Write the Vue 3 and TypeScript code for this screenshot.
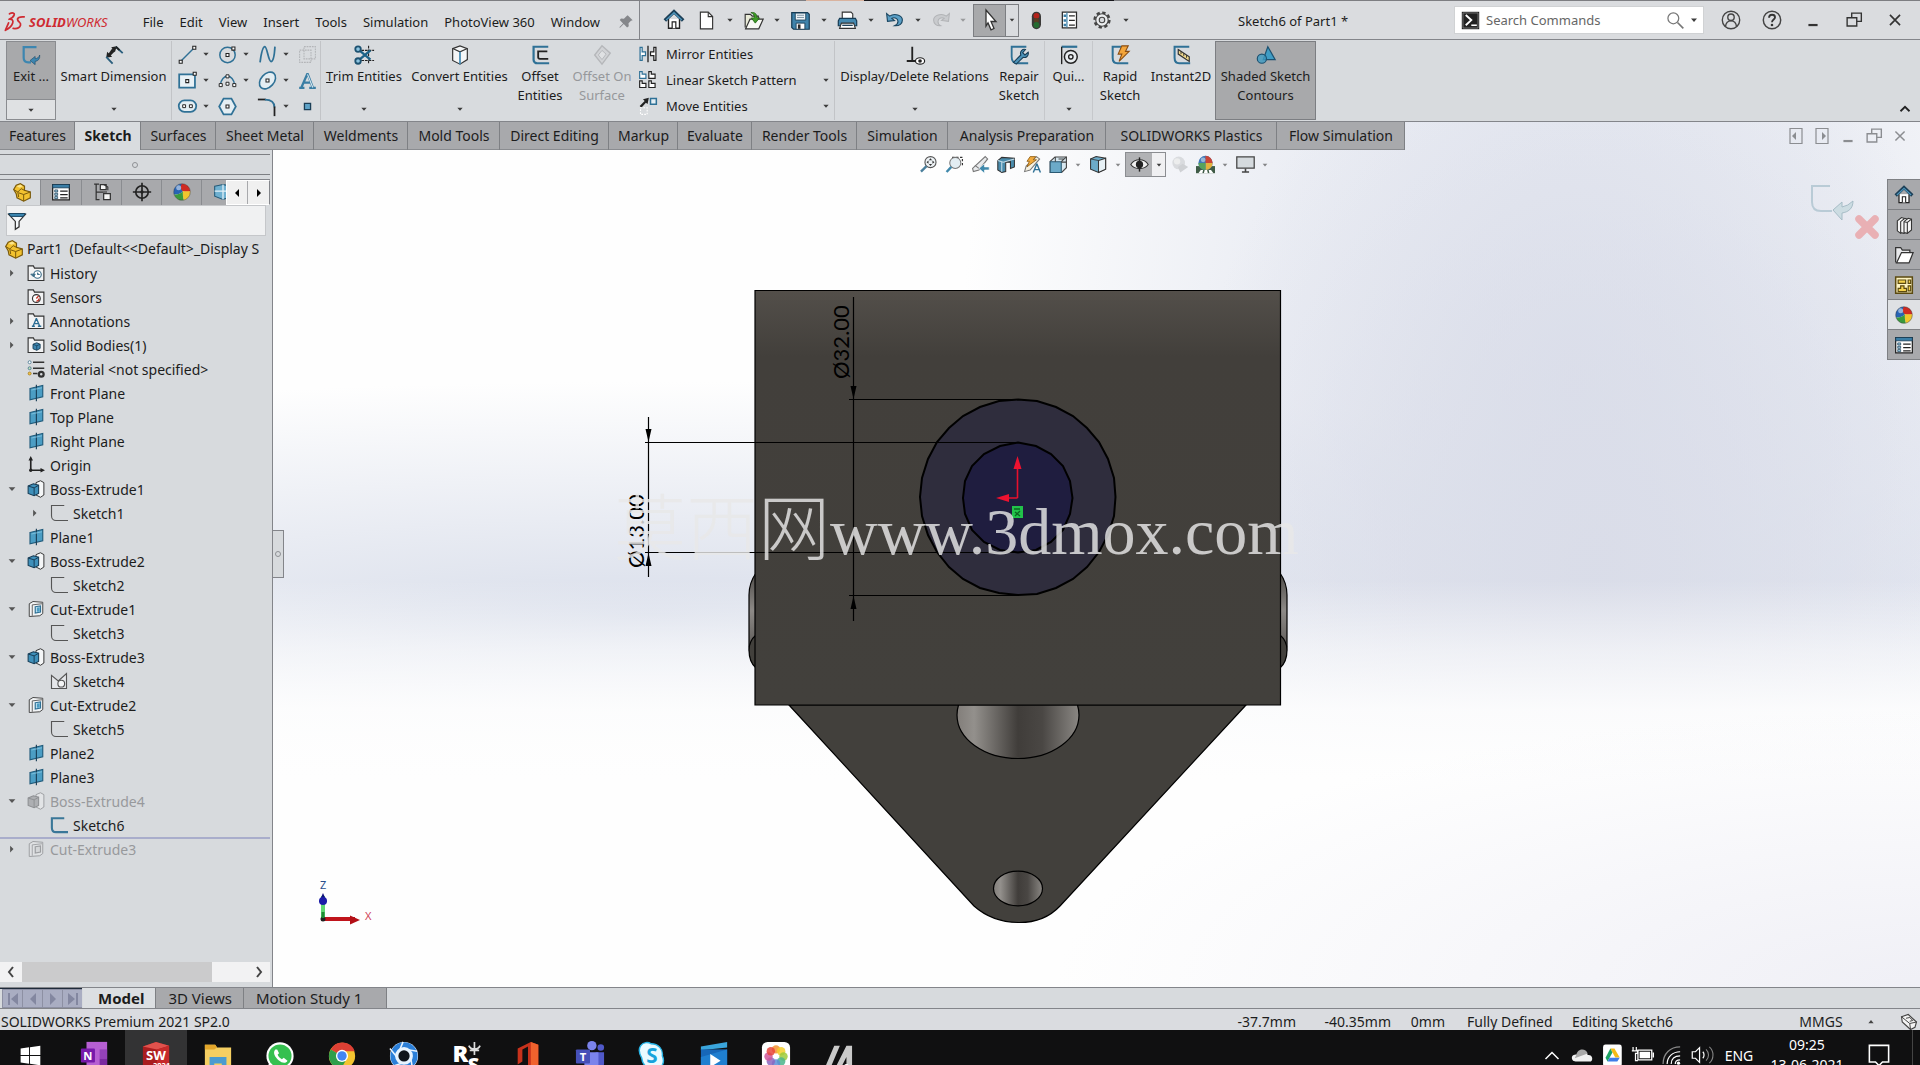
<script setup lang="ts">
import { defineComponent, h, ref } from 'vue'

const glyphs: Record<string, string> = {
  caret: '<path d="M8 10h8l-4 4.500z" fill="#3c3c3c"/>',
  pin: '<path d="M14 4l6 6-2 .5-3 3 .3 3.500-2 1.500-4-4-4.500 4.500-.8-.8 4.500-4.500-4-4 1.500-2 3.500.3 3-3z" fill="#85878b"/>',
  ds: '<g fill="none" stroke="#cf2b32" stroke-width="1.900" stroke-linecap="round" stroke-linejoin="round"><path d="M6 3c3-1.500 6-1 5 1.500S7 8.500 5.500 9c3-.5 5 1 4 4-1 3-4 6-8 8l3.500-8"/><path d="M22 6.500c-5-.5-8 1-7 3.500s4 2.500 3 5.500-4 4-8 3.500"/></g>',
  home: '<path d="M6 11v10h12V11" fill="#fff" stroke="#222" stroke-width="1.500"/><path d="M2 12.500L12 3l10 9.500" fill="none" stroke="#1c3f57" stroke-width="4"/><path d="M3.500 12L12 4l8.500 8" fill="none" stroke="#4d94ba" stroke-width="1.500"/><path d="M10 21v-7h4v7" fill="#fff" stroke="#222" stroke-width="1.300"/>',
  doc: '<path d="M5 2.500h9l5 5v14H5z" fill="#fff" stroke="#333" stroke-width="1.300"/><path d="M14 2.500v5h5" fill="none" stroke="#333" stroke-width="1.300"/>',
  open: '<path d="M2.500 20V5h6l2 2h7v4" fill="#e9ebd8" stroke="#333" stroke-width="1.300"/><path d="M3 21.500l5-11h15l-5 11z" fill="#f8f9f4" stroke="#333" stroke-width="1.300"/><path d="M9 3c5-1 7 2 7 6h3l-5 6-4.500-6H13c0-3-1-5-4-6z" fill="#3f9b28" stroke="#1d5c10" stroke-width=".8"/>',
  save: '<path d="M2 3h18l2 2v17H4l-2-2z" fill="#3f83ab" stroke="#173c55" stroke-width="1.400"/><path d="M6 3.500h12v8H6z" fill="#eef4f8" stroke="#173c55"/><path d="M8 6h8M8 8.500h8" stroke="#6f8898"/><path d="M7 15h10v7H7z" fill="#fff" stroke="#173c55"/><path d="M9 16.500h3v5H9z" fill="#2a2a2a"/>',
  print: '<path d="M6 10V2.500h10l2 2V10" fill="#fff" stroke="#333" stroke-width="1.300"/><path d="M3 9.500h18l1.500 3V18h-21v-5.500z" fill="#4589b0" stroke="#173c55" stroke-width="1.400"/><path d="M5 15h14l2 6H3z" fill="#fff" stroke="#333" stroke-width="1.300"/><path d="M6 17.500h12" stroke="#173c55" stroke-width="1.500"/>',
  undo: '<path d="M3 4l1 9 8-1-3-2.500c3-1.500 7 0 7 3.500 0 2.500-2 4-4 5 6 .5 9-2.500 9-6.500C21 6 12 3 6.500 7z" fill="#5a9fc6" stroke="#1b4661" stroke-width="1.300"/>',
  redo: '<path d="M21 4l-1 9-8-1 3-2.500c-3-1.500-7 0-7 3.500 0 2.500 1 4 3 5-5 .5-8-2.500-8-6.500C3 6 12 3 17.500 7z" fill="#c9cbce" stroke="#b2b4b7" stroke-width="1.200"/>',
  cursor: '<path d="M8 2l10 11.500h-5l3 7-3 1.300-3-7L8 18z" fill="#fff" stroke="#333" stroke-width="1.300"/>',
  traffic: '<rect x="7" y="2" width="11" height="21" rx="5.500" fill="#3b3a38"/><circle cx="12.500" cy="7" r="3.500" fill="#b4231b"/><circle cx="12.500" cy="12.500" r="3" fill="#5b3c22"/><circle cx="12.500" cy="18" r="3.500" fill="#256b30"/>',
  options: '<path d="M4 2.500h17v19H4z" fill="#fff" stroke="#2b2b2b" stroke-width="1.500"/><path d="M9.500 3v18" stroke="#3f83ab" stroke-width="1.500"/><path d="M5.500 5.500h3v3h-3zM5.500 11h3v3h-3zM5.500 16.500h3v3h-3z" fill="#3b7ea6"/><path d="M12 7h7M12 12.500h7M12 18h7" stroke="#2b2b2b" stroke-width="1.500"/>',
  gear: '<circle cx="12" cy="12" r="8" fill="none" stroke="#444" stroke-width="2.800" stroke-dasharray="3.600 2.680"/><circle cx="12" cy="12" r="6.800" fill="#eceef0" stroke="#444" stroke-width="1.200"/><circle cx="12" cy="12" r="3" fill="#d8dadd" stroke="#444" stroke-width="1.200"/>',
  search: '<circle cx="10" cy="10" r="6.500" fill="none" stroke="#777" stroke-width="1.500"/><path d="M15 15l7 7" stroke="#777" stroke-width="2"/>',
  prompt: '<path d="M1 1h22v22H1z" fill="#222"/><path d="M2.500 2.500h19v19h-19z" fill="none" stroke="#888"/><path d="M6 5l7 6.500L6 18" fill="none" stroke="#fff" stroke-width="2.400"/><path d="M13 18h7" stroke="#fff" stroke-width="2"/>',
  user: '<g fill="none" stroke="#444" stroke-width="1.500"><circle cx="12" cy="12" r="9.500"/><circle cx="12" cy="9" r="3.500"/><path d="M6 19c.5-4 2.500-6 6-6s5.500 2 6 6"/></g>',
  help: '<circle cx="12" cy="12" r="9.500" fill="none" stroke="#444" stroke-width="1.600"/><path d="M8.800 9.500c0-4.500 6.500-4 6.500-.5 0 2.500-3.300 2.500-3.300 5.500" fill="none" stroke="#333" stroke-width="2"/><circle cx="12" cy="17.500" r="1.400" fill="#333"/>',
  min: '<path d="M7 17.500h10" stroke="currentColor" stroke-width="2.400"/>',
  restore: '<path d="M9.500 9V4.500h10.500v9h-5M4.500 9.500h10.500v9H4.500z" fill="none" stroke="currentColor" stroke-width="1.500"/>',
  close: '<path d="M6.500 6.500l11 11M17.500 6.500l-11 11" stroke="currentColor" stroke-width="1.800"/>',
  paneLeft: '<path d="M6 4.500h12v15H6z" fill="none" stroke="#8b8d91" stroke-width="1.200"/><path d="M12 8v8l-4-4z" fill="#8b8d91"/>',
  paneRight: '<path d="M6 4.500h12v15H6z" fill="none" stroke="#8b8d91" stroke-width="1.200"/><path d="M12 8v8l4-4z" fill="#8b8d91"/>',
  exit: '<path d="M18 3.500H4V15c0 3 1.500 5 5 5h3" fill="none" stroke="#3d86b0" stroke-width="2.400"/><path d="M21.500 12c.5 4-1.500 6.500-5 7v3.500L11 18l5.500-4.500V16c2 0 4-1 5-4z" fill="#3d86b0" stroke="#1d4d6a" stroke-width=".7"/>',
  smart: '<path d="M5 12l5-7 3 3-6 6z" fill="#222"/><path d="M9 3.500l6-1-2 6.500zM4.500 8.500L10 14l-6.500 1z" fill="#222"/><path d="M14 3l7.500 7M3.500 14l7 7.500" stroke="#2b5f7d" stroke-width="2"/><path d="M14 3l4 3.700" stroke="#222" stroke-width="2"/>',
  line: '<path d="M4 20L20 4" stroke="#2f7196" stroke-width="1.700"/><path d="M2.500 18.500h3.500V22H2.500zM18 2.500h3.500V6H18z" fill="#fff" stroke="#222" stroke-width="1.200"/>',
  circle: '<circle cx="12" cy="12.500" r="8.800" fill="none" stroke="#2f7196" stroke-width="1.700"/><path d="M10.300 10.800h3.400v3.400h-3.400zM17 3.500h3.500V7H17z" fill="#fff" stroke="#222" stroke-width="1.200"/>',
  spline: '<path d="M3.500 21C5 9 6.500 3 9 3s4 17 7 17 4-8 4.500-17" fill="none" stroke="#2f7196" stroke-width="2"/>',
  planes: '<g fill="none" stroke="#b3b5b8" stroke-width="1.200" stroke-dasharray="2 1"><path d="M3 7h13v14H3zM8 3h13v14H8z"/></g>',
  rect: '<path d="M2.500 5h18v15h-18z" fill="#e8f1f6" stroke="#2f7196" stroke-width="2"/><path d="M10 11h3.400v3.400H10zM18.500 2.500H22V6h-3.500z" fill="#fff" stroke="#222" stroke-width="1.200"/>',
  arc: '<path d="M4 17C5 4 19 4 20 17" fill="none" stroke="#2f7196" stroke-width="1.700"/><path d="M2.500 15.500h3.500V19H2.500zM18 15.500h3.500V19H18zM10.300 5.500h3.400V9h-3.400zM10.300 14h3.400v3.400h-3.400z" fill="#fff" stroke="#222" stroke-width="1.100"/>',
  ellipse: '<ellipse cx="12" cy="12" rx="11" ry="7.500" transform="rotate(-48 12 12)" fill="#e4eef3" stroke="#2f7196" stroke-width="1.800"/><path d="M10.300 10.300h3.400v3.400h-3.400z" fill="#fff" stroke="#222" stroke-width="1.200"/>',
  letterA: '<path d="M12 4L5 20M12 4l6 16M8 14.500h8M2.500 20.500h6M14 20.500h7.500" fill="none" stroke="#3a7ea4" stroke-width="2.600"/><path d="M12 5l6 15" stroke="#dcebf3" stroke-width="1.200"/>',
  slot: '<rect x="2" y="5" width="20" height="13" rx="6.500" fill="#e4eef3" stroke="#2f7196" stroke-width="2"/><path d="M6.500 10h3.300v3.300H6.500zM14.200 10h3.300v3.300h-3.300z" fill="#fff" stroke="#222" stroke-width="1.100"/>',
  polygon: '<path d="M7.500 3h9L21.500 12l-5 9h-9L2.500 12z" fill="#e4eef3" stroke="#2f7196" stroke-width="2"/><path d="M10.300 10.300h3.400v3.400h-3.400z" fill="#fff" stroke="#222" stroke-width="1.200"/>',
  fillet: '<path d="M1 4h9" stroke="#222" stroke-width="2"/><path d="M9 4c8 0 11 3 11 9" fill="none" stroke="#2f7196" stroke-width="2"/><path d="M20 12v11" stroke="#222" stroke-width="2"/>',
  point: '<path d="M8.500 8.500h7v7h-7z" fill="#5ea3c8" stroke="#1c3f57" stroke-width="1.500"/>',
  trim: '<path d="M17 2v20M9 18h14M9 7h14" stroke="#222" stroke-width="1.200" stroke-dasharray="3 1"/><path d="M7 7l12 10M7 17L19 7" stroke="#1d6388" stroke-width="2.600"/><circle cx="5.500" cy="5.500" r="3" fill="#8cc4e0" stroke="#1d5271" stroke-width="2"/><circle cx="5.500" cy="18.500" r="3" fill="#8cc4e0" stroke="#1d5271" stroke-width="2"/>',
  cube: '<path d="M4 5l8-3 8 3v12l-8 5-8-4z" fill="#f4f6f7" stroke="#333" stroke-width="1.300"/><path d="M4 5l8 3.500L20 5" fill="none" stroke="#333" stroke-width="1.200"/><path d="M12 8.500V22" stroke="#3d86b0" stroke-width="1.800"/>',
  offset: '<path d="M21 3H5v14.500C5 19.500 7 21 9 21h13" fill="none" stroke="#2f7196" stroke-width="2.400"/><path d="M20 8H10v6.500c0 1 1 1.700 2 1.700h9" fill="none" stroke="#222" stroke-width="2"/>',
  surface: '<path d="M12 2l9 8-9 12-8-10z" fill="#d1d3d6" stroke="#b5b7ba" stroke-width="1.500"/><path d="M12 7l4.500 4-4.500 6-4-5z" fill="#dfe1e3" stroke="#b5b7ba"/>',
  mirror: '<path d="M12 2v20" stroke="#222" stroke-width="1.600"/><path d="M2.500 4H5v5.500h4V14H5v5.500H2.500z" fill="#fff" stroke="#2f7196" stroke-width="1.500"/><path d="M21.500 4H19v5.500h-4V14h4v5.500h2.500z" fill="#fff" stroke="#222" stroke-width="1.500"/>',
  pattern: '<g fill="#fff" stroke-width="1.400"><path d="M2 2h3v3h4.500v5H2z" stroke="#2f7196"/><path d="M13 2h3v3h4.500v5H13zM2 13h3v3h4.500v5H2zM13 13h3v3h4.500v5H13z" stroke="#222"/></g>',
  move: '<path d="M2 12l6-6-2-2 7-2-1.500 7.500L9.500 8 4 14z" fill="#222"/><path d="M15 3h7v7h-7z" fill="#e4eef3" stroke="#2f7196" stroke-width="1.800"/><path d="M3 14h8v8H3z" fill="none" stroke="#fff" stroke-width="1.300" stroke-dasharray="2 1.500"/>',
  relations: '<path d="M9 3v15M3 18.500h11" stroke="#222" stroke-width="2"/><ellipse cx="17.500" cy="18.500" rx="5" ry="3.500" fill="#fff" stroke="#222" stroke-width="1.300"/><circle cx="17.500" cy="18.500" r="2" fill="#222"/>',
  repair: '<path d="M20 3H4v11c0 4 2 7 6 7h12" fill="none" stroke="#2f7196" stroke-width="2"/><path d="M6 20l8-8c-1.500-4 2-7 5-6l-3 3.500 2.500 2.500L22 9c1 4-2.500 6.500-5.500 5.500L9 22z" fill="#4d94ba" stroke="#173c55" stroke-width="1.200"/>',
  snaps: '<path d="M4 3h17" stroke="#2f7196" stroke-width="2.400"/><path d="M4 3v19" stroke="#222" stroke-width="1.500"/><circle cx="14" cy="14" r="7" fill="#e8ecef" stroke="#222" stroke-width="1.600"/><circle cx="14" cy="14" r="2.400" fill="none" stroke="#222" stroke-width="1.500"/>',
  rapid: '<path d="M13 3H4v12c0 4 2 6 5 6h12" fill="none" stroke="#2f7196" stroke-width="2.200"/><path d="M14 2h7l-3 6h4l-11 11 3-8h-4z" fill="#f3a53a" stroke="#8a4d12" stroke-width="1.200"/>',
  instant: '<path d="M21 3H5v12c0 4 1.500 6 5 6h12" fill="none" stroke="#2f7196" stroke-width="2.200"/><path d="M9 6l12 8v5L9 11z" fill="#f0d98c" stroke="#333" stroke-width="1.300"/><path d="M12 8v3M15 10v3M18 12v3" stroke="#333"/>',
  shaded: '<path d="M14 3l8 14H9z" fill="#3f9cc4" stroke="#1d5271" stroke-width="1.300"/><circle cx="7.500" cy="16" r="5" fill="#3f9cc4" fill-opacity=".8" stroke="#1d5271" stroke-width="1.300"/>',
  up: '<path d="M6 15l6-6 6 6" fill="none" stroke="#222" stroke-width="2.400"/>',
  part: '<path d="M2 9l3-5 5-2 5 3v5l7 2v7l-8 4-8-4-1-5z" fill="#f2c230" stroke="#7a5a0c" stroke-width="1.400"/><path d="M2 9l5 3 1 6M7 12l4-4 4 2M14 15l8-3M14 15v8M8 13l6 2" fill="none" stroke="#7a5a0c" stroke-width="1.200"/><path d="M5.500 5l4.500-2 3 2-4 2z" fill="#fbe58c"/>',
  props: '<path d="M2 3h20v18.500H2z" fill="#fff" stroke="#222" stroke-width="1.500"/><path d="M2 3h20v4H2z" fill="#3b7ea6" stroke="#1c3f57"/><path d="M4.500 9.500h3.500v2.500H4.500zM4.500 13.500h3.500V16H4.500zM4.500 17.500h3.500V20H4.500z" fill="#9cc9e0" stroke="#1c3f57" stroke-width=".9"/><path d="M11 11h9M11 15h9M11 19h9" stroke="#222" stroke-width="1.500"/>',
  config: '<path d="M5 2v20M2.500 2.500h6M5 12h9M5 21h4" stroke="#333" stroke-width="1.500"/><path d="M10 3h7v6h-7zM14 14h8v7h-8z" fill="#f5f5f5" stroke="#333" stroke-width="1.500"/><path d="M14 3l5 3v4M14 12h4" fill="none" stroke="#333" stroke-width="1.300"/>',
  target: '<circle cx="12" cy="12" r="7.500" fill="none" stroke="#222" stroke-width="2"/><path d="M12 1v22M1 12h22" stroke="#222" stroke-width="2"/><circle cx="12" cy="12" r="2" fill="#222"/>',
  ball: '<circle cx="12" cy="12" r="10" fill="#e8e8e8"/><path d="M12 2a10 10 0 0 0-10 10c0 1 .2 2 .5 3C7 15 11 14 13 11z" fill="#2864b4"/><path d="M12 2a10 10 0 0 1 10 9c-3 1-6 1-9 0C10 9 10 4 12 2z" fill="#cf2a22"/><path d="M22 11a10 10 0 0 1-8 10.800C13 18 13 14 13 11z" fill="#f0c62e"/><path d="M2.500 15A10 10 0 0 0 14 21.800C13 18 13 14 13 11c-2 3-6 4-10.500 4z" fill="#3a9a3c"/><circle cx="12" cy="12" r="10" fill="none" stroke="#333" stroke-opacity=".5"/><circle cx="8" cy="7" r="3" fill="#fff" fill-opacity=".5"/>',
  display: '<path d="M2 5l10-2 10 2v12l-10 4L2 17z" fill="#6fb0d0" stroke="#245a78" stroke-width="1.300"/><path d="M12 3v18M2 11h20" stroke="#e5f1f7" stroke-width="1.500"/>',
  funnel: '<path d="M2 4h20l-7.500 8.500V19L10 22v-9.500z" fill="#f5f8fa" stroke="#333" stroke-width="1.500"/><path d="M2 3h20l-2.500 3.500h-15z" fill="#3b86b0" stroke="#1c4864" stroke-width="1.200"/>',
  history: '<path d="M1.500 22V2.500h7L10 5.500h12.500V22z" fill="#f1f2f3" stroke="#333" stroke-width="1.500"/><circle cx="14" cy="14" r="5" fill="#fff" stroke="#3a6c88" stroke-width="1.500"/><path d="M14 11.500V14h3M5 13.500l3.500 3.500 2.500-3.500z" stroke="#3a6c88" stroke-width="1.200" fill="#3a6c88"/>',
  sensors: '<path d="M1.500 22V2.500h7L10 5.500h12.500V22z" fill="#f1f2f3" stroke="#333" stroke-width="1.500"/><circle cx="12.500" cy="14" r="5.200" fill="#fff" stroke="#333" stroke-width="1.500"/><path d="M12.500 14l3-3.500M12.500 17.500a3.500 3.500 0 0 0 3.500-3.500" fill="none" stroke="#c43325" stroke-width="1.800"/>',
  annotations: '<path d="M1.500 22V2.500h7L10 5.500h12.500V22z" fill="#f1f2f3" stroke="#333" stroke-width="1.500"/><path d="M12.500 8.500L8 19M12.500 8.500l4.500 10.500M10 15.500h5M6.500 19h4M14.500 19H19" fill="none" stroke="#2b6d94" stroke-width="1.700"/>',
  bodies: '<path d="M1.500 22V2.500h7L10 5.500h12.500V22z" fill="#f1f2f3" stroke="#333" stroke-width="1.500"/><path d="M8 11l5-2 4.500 2v5.500L13 19l-5-2z" fill="#3d86b0" stroke="#173c55" stroke-width="1.200"/><path d="M8 11l5 2 4.500-2M13 13v6" fill="none" stroke="#173c55"/>',
  material: '<path d="M8 3h15M8 11h15M8 18h6" stroke="#333" stroke-width="1.800"/><circle cx="3.500" cy="3" r="2" fill="#fff" stroke="#3a6c88"/><circle cx="3.500" cy="11" r="2" fill="#bfe0b8" stroke="#3a6c88"/><circle cx="3.500" cy="18" r="2" fill="#f0c048" stroke="#a07a1a"/><circle cx="19" cy="19" r="3.200" fill="none" stroke="#333" stroke-width="3"/>',
  plane: '<path d="M4 6l17-4v15L4 21z" fill="#4b9dc4" stroke="#1f5a7a" stroke-width="1.500"/><path d="M12.500 1v22" stroke="#173c55" stroke-width="1.500"/><path d="M6 8l14-3" stroke="#7fc0dc" stroke-width="1.200"/>',
  origin: '<path d="M5 4v15h15" fill="none" stroke="#222" stroke-width="2.200"/><path d="M5 0l3 6H2zM24 19l-6-3v6z" fill="#222"/><circle cx="5" cy="19" r="2.200" fill="#222"/>',
  boss: '<path d="M12 3.500L18 1l4.500 2.500V20L18 23l-6-3z" fill="#f4f6f7" stroke="#333" stroke-width="1.300"/><path d="M1.500 8l7-3 7 2v11l-6 3-8-3z" fill="#3f90ba" stroke="#173c55" stroke-width="1.400"/><path d="M1.500 8l8 2.500 6-3.500M9.500 10.500V21" fill="none" stroke="#173c55" stroke-width="1.300"/>',
  cut: '<path d="M3 5l5-3 13 1v15l-4 3-14 1z" fill="#f2f4f5" stroke="#444" stroke-width="1.300"/><path d="M7 6.500l13-1.500M7 6.500V21" stroke="#555" stroke-width="1.200"/><path d="M11 9l7-1v8l-7 1.500z" fill="#d8eef7" stroke="#2f7196" stroke-width="1.600"/><path d="M13 10l4-.5v6h-4z" fill="#4b9dc4"/>',
  bossOff: '<path d="M12 3.500L18 1l4.500 2.500V20L18 23l-6-3z" fill="#e2e4e6" stroke="#9c9ea1" stroke-width="1.300"/><path d="M1.500 8l7-3 7 2v11l-6 3-8-3z" fill="#adafb2" stroke="#8e9093" stroke-width="1.400"/><path d="M1.500 8l8 2.500 6-3.500M9.500 10.500V21" fill="none" stroke="#8e9093" stroke-width="1.300"/>',
  cutOff: '<path d="M3 5l5-3 13 1v15l-4 3-14 1z" fill="#dfe1e3" stroke="#9c9ea1" stroke-width="1.300"/><path d="M7 6.500l13-1.500M7 6.500V21" stroke="#9c9ea1" stroke-width="1.200"/><path d="M11 9l7-1v8l-7 1.500z" fill="#d4d6d8" stroke="#9c9ea1" stroke-width="1.600"/>',
  sketch: '<path d="M19 2H2v13.500C2 19 4.500 22 8 22h16" fill="none" stroke="#555" stroke-width="1.500"/>',
  sketchActive: '<path d="M19 3H2.500v12.500C2.500 19 4.500 21.500 8 21.500h16" fill="none" stroke="#3a7798" stroke-width="2.800"/>',
  sketchClosed: '<path d="M2 4.500V22h20V2L11 12z" fill="#e5e7ea" stroke="#555" stroke-width="1.500"/><circle cx="15" cy="15.500" r="4.500" fill="#f4f5f6" stroke="#555" stroke-width="1.500"/>',
  closedArrow: '<path d="M9.500 7.500v9l4.500-4.500z" fill="#555"/>',
  openArrow: '<path d="M7.500 9.500h9L12 14.500z" fill="#555"/>',
  zoomFit: '<circle cx="14.500" cy="9" r="7" fill="#eef3f6" stroke="#555" stroke-width="1.400"/><path d="M9.500 14L2.500 21" stroke="#4a7f9c" stroke-width="3"/><path d="M14.500 4l2 2.500h-4zM14.500 14l2-2.500h-4zM9.500 9L12 7v4zM19.500 9L17 7v4z" fill="#333"/>',
  zoomArea: '<path d="M9 3h13v12" fill="none" stroke="#333" stroke-width="1.500" stroke-dasharray="3 2"/><circle cx="13" cy="10" r="7" fill="#e3edf2" stroke="#777" stroke-width="1.300"/><path d="M8 15l-6 6.500" stroke="#3f88ab" stroke-width="3"/>',
  prev: '<path d="M18 2l3 3L10 19l-7 2-1-4z" fill="#e8eaec" stroke="#777" stroke-width="1.400"/><path d="M5 13l5 4" stroke="#777" stroke-width="1.300"/><path d="M23 15h-6v-4l-7 6 7 6v-4h6z" fill="#3f88ab" stroke="#fff" stroke-width=".8"/>',
  section: '<path d="M1 7l5-4 16 1v11l-5 2V9h-6v12l-5 1-5-3z" fill="#4a8cac" stroke="#333" stroke-width="1.300"/><path d="M11 9l6-2v9" fill="none" stroke="#333"/><path d="M6 9v12M1 7l7 2 14-4" fill="none" stroke="#c8dfea" stroke-width="1.300"/>',
  annView: '<path d="M17 2l4 3L9 19l-7 2 2-7z" fill="#f5f0e0" stroke="#777" stroke-width="1.300"/><path d="M9 2h7l-3 4h4L5 15l3-7H5z" fill="#f0a93c" stroke="#8a5a12"/><path d="M17.500 11L13 22M17.500 11L22 22M15 18.500h5" stroke="#2f7196" stroke-width="1.800"/>',
  orient: '<path d="M1.500 8l6-5.500H22V16l-6 6H1.500z" fill="#d7e7ef" stroke="#444" stroke-width="1.400"/><path d="M1.500 8.500h14V22h-14z" fill="#6caac8" stroke="#2b5a73" stroke-width="1.300"/><path d="M15.500 8.500L22 2.500M8 2.500v6M22 9h-6.500M12 5h8" fill="none" stroke="#444" stroke-width="1.300"/>',
  style: '<path d="M2 5l7-3 12 2v14l-9 4-10-4z" fill="#6cabc9" stroke="#333" stroke-width="1.300"/><path d="M12 7v15l9-4V4z" fill="#e6f0f5" stroke="#333" stroke-width="1.300"/><path d="M2 5l10 2" stroke="#333"/>',
  eye: '<path d="M1 12c5-8 17-8 22 0-5 7-17 7-22 0z" fill="#f0f0f0" stroke="#333" stroke-width="1.400"/><circle cx="12" cy="12" r="4.600" fill="#222"/><path d="M12 3v18" stroke="#222" stroke-width="1.800"/>',
  sphereOff: '<circle cx="11" cy="10" r="8" fill="#d9dbde"/><path d="M10 15l6-4 7 4-10 7z" fill="#cfd1d4"/><circle cx="9" cy="8" r="4" fill="#eceded"/>',
  scene: '<path d="M0 14h24v9H0z" fill="#3f5b46"/><path d="M3 23l3-4h3l-1 4zM10 23l1-4h3l1 4zM17 23l-1-4h3l3 4z" fill="#fff"/><circle cx="12" cy="10" r="9" fill="#3f78b8"/><path d="M12 1a9 9 0 0 1 9 9h-9z" fill="#c94436"/><path d="M21 10a9 9 0 0 1-9 9v-9z" fill="#e3b13c"/><path d="M12 19a9 9 0 0 1-9-9h9z" fill="#56a35c"/><circle cx="9" cy="6" r="3" fill="#fff" fill-opacity=".45"/>',
  monitor: '<path d="M1 2.500h22v14H1z" fill="#d5dade" stroke="#444" stroke-width="1.600"/><path d="M12 17v4M7.500 21.500h9" stroke="#444" stroke-width="2"/>',
  books: '<g fill="#f5f5f5" stroke="#333" stroke-width="1.300"><path d="M4 7l5-4 3 1v15l-4 3-4-3z"/><path d="M8 8l5-4 3 1v14l-4 3-4-1z"/><path d="M12 8l5-4 4 1v13l-5 4-4-1z"/><path d="M16 9v13M12 8l4 1 5-4" fill="none"/></g>',
  folder: '<path d="M2 21V3h6l2 3h9v3" fill="#e8e9eb" stroke="#333" stroke-width="1.500"/><path d="M3 21.500L9 9h14l-5 12.500z" fill="#fff" stroke="#333" stroke-width="1.500"/>',
  palette: '<path d="M2 2.500h20v19.500H2z" fill="#fdf3c0" stroke="#5b4a10" stroke-width="1.800"/><path d="M5 6h9v4H5zM17 6h3v4h-3zM8 13h4v3h3v4H5v-4h3zM17 13h3v6h-3z" fill="#f5d24c" stroke="#5b4a10" stroke-width="1.400"/>',
  tag: '<path d="M2 5l9-3 11 10-2 7-6 3L3 12z" fill="#f4f4f4" stroke="#444" stroke-width="1.500"/><path d="M2 5l11 9 9-2M13 14l1 8M8 7l5-1 4 4-4 1" fill="none" stroke="#444" stroke-width="1.300"/>',
  upSmall: '<path d="M8 14h8l-4-5z" fill="#444"/>',
}

const appGlyphs: Record<string, string> = {
  windows: '<path d="M6 9l9-1.300V16H6zM16 7.600L27 6v10H16zM6 17h9v8.300L6 24zM16 17h11v10l-11-1.600z" fill="#fff"/>',
  onenote: '<path d="M8 2h22v28H8z" fill="#b65fd2"/><path d="M22 10h8v10h-8z" fill="#9442b8"/><path d="M22 20h8v10h-8z" fill="#7b2aa0"/><rect x="2" y="9" width="15" height="15" rx="1" fill="#7719aa"/><text x="9.500" y="21" font-size="12" font-weight="700" text-anchor="middle" fill="#fff" font-family="Noto Sans, sans-serif">N</text>',
  sw: '<path d="M2 7l14-5 14 4v22l-13 4-15-5z" fill="#a91d1f"/><path d="M2 7l14-5 14 4-13 4z" fill="#e0524d"/><path d="M17 10l13-4v22l-13 4z" fill="#c62a2a"/><text x="16" y="21" font-size="14" font-weight="700" text-anchor="middle" fill="#fff" font-family="Noto Sans, sans-serif">SW</text><text x="22" y="30" font-size="8" font-weight="700" text-anchor="middle" fill="#fff" font-family="Noto Sans, sans-serif">2021</text>',
  explorer: '<path d="M2 5h11l2 3h15v24H2z" fill="#f5cf62"/><path d="M2 5h11l2 3-3 2H2z" fill="#e3a62b"/><path d="M7 32V18h18v14h-5v-7h-8v7z" fill="#4a9bd0"/>',
  whatsapp: '<circle cx="16" cy="17" r="14.500" fill="#fff"/><path d="M2 32l2.500-8 6 6z" fill="#fff"/><circle cx="16" cy="17" r="12.300" fill="#35c04f"/><path d="M11 10c-3 3-.5 8 3.500 11.500s8 3.500 9.500.5l-4-3-2 1.500c-2-1-4-3-4.500-5l1.500-1.500-2-4z" fill="#fff"/>',
  chrome: '<circle cx="16" cy="17" r="14" fill="#f4c430"/><path d="M16 17L4 10A14 14 0 0 1 29.500 12H16z" fill="#de4034"/><path d="M4 10a14 14 0 0 0 11 21l6-11-5-3z" fill="#2f9e4c"/><circle cx="16" cy="17" r="6.500" fill="#fff"/><circle cx="16" cy="17" r="5" fill="#4285f4"/>',
  lens: '<circle cx="16" cy="17" r="15" fill="#e8f4ff"/><circle cx="16" cy="17" r="12" fill="none" stroke="#2b7fd8" stroke-width="5"/><g fill="none" stroke="#e8f4ff" stroke-width="1.600"><path d="M10 14L15 2M18 10l12 2M23 18l2 12M16 24L4 28M9 19L1 9"/></g><circle cx="16" cy="17" r="8" fill="#e8f4ff"/><circle cx="16" cy="17" r="6" fill="#10151c"/>',
  rs: '<text x="10" y="23" font-size="25" font-weight="900" text-anchor="middle" fill="#fff" font-family="Noto Sans, sans-serif">R</text><text x="24" y="34" font-size="21" font-weight="900" text-anchor="middle" fill="#fff" font-family="Noto Sans, sans-serif">S</text><path d="M25 2v14M19 6c2 5 10 5 12 0M20 11h10" fill="none" stroke="#ddd" stroke-width="1.800"/>',
  office: '<path d="M5 9l14-7 8 3v24l-8 3-14-5 11 1V7L10 10v13l-5 3z" fill="#c8321c"/><path d="M19 2l8 3v24l-8 3z" fill="#f0622d"/>',
  teams: '<circle cx="18" cy="6" r="5" fill="#7b83eb"/><circle cx="27.500" cy="8" r="3.500" fill="#5059c9"/><path d="M22 13h9v12c0 4-4 6-8 5z" fill="#5059c9"/><path d="M10 13h15v13c0 7-13 8-15 1z" fill="#7b83eb"/><rect x="1" y="10" width="15" height="15" rx="1" fill="#4650b8"/><text x="8.500" y="22" font-size="12" font-weight="700" text-anchor="middle" fill="#fff" font-family="Noto Sans, sans-serif">T</text>',
  skype: '<path d="M4 6c3-4 8-4 11-2 8 0 13 6 12 13 3 6 0 13-6 14-6 2-15-2-16-12C2 14 2 9 4 6z" fill="#eafaff" stroke="#28b5e8" stroke-width="1.500"/><text x="16" y="25" font-size="22" font-weight="700" text-anchor="middle" fill="#17a3dc" font-family="Noto Sans, sans-serif">S</text>',
  movies: '<path d="M2 7l28-5v6L2 11z" fill="#3aa5dc"/><path d="M2 10h28v22H2z" fill="#1767b8"/><path d="M2 18l28-8v22H2z" fill="#1f7fd0"/><path d="M12 15l11 7-11 7z" fill="#fff"/>',
  photos: '<rect x="1" y="2" width="30" height="30" rx="6" fill="#fff"/><g fill-opacity=".85"><circle cx="16" cy="10" r="4.500" fill="#f59331"/><circle cx="21.500" cy="12" r="4.500" fill="#f3cf2d"/><circle cx="24" cy="17.500" r="4.500" fill="#9ccb3b"/><circle cx="21.500" cy="23" r="4.500" fill="#4bb58c"/><circle cx="16" cy="25" r="4.500" fill="#5b8fd8"/><circle cx="10.500" cy="23" r="4.500" fill="#8c66c0"/><circle cx="8" cy="17.500" r="4.500" fill="#d1579a"/><circle cx="10.500" cy="12" r="4.500" fill="#e8483c"/></g><circle cx="16" cy="17.500" r="1.500" fill="#fff"/>',
  slashes: '<path d="M1 32L12 6h6L7 32zM12 32L25 6h6v26h-6V18l-7 14z" fill="#c9c9c9"/><circle cx="25" cy="28" r="2.500" fill="#fff"/>',
  chevron: '<path d="M8 21l8-8 8 8" fill="none" stroke="#fff" stroke-width="1.800"/>',
  cloud: '<path d="M5 23c-4-5 1-9 6-7 2-7 11-6 12 0 6-1 7 6 4 8H8z" fill="#f1f1f1"/><path d="M9 16c2-9 12-8 14-2L7 20z" fill="#a9a9a9"/>',
  drive: '<rect x="5" y="3" width="23" height="27" rx="3" fill="#fff"/><path d="M14 8h5l6.500 11h-5.500z" fill="#f5bb16"/><path d="M14 8l2.500 5-6 11L8 19.500z" fill="#1da362"/><path d="M13 19.500h12.500L22.500 24h-12z" fill="#3f7de8"/>',
  battery: '<path d="M11 10h17v12H11zM30 13v6" fill="none" stroke="#fff" stroke-width="1.600"/><path d="M13 12h13v8H13z" fill="#fff"/><path d="M5 6v4M9 6v4M3.500 11h7v3H8v9h3" fill="none" stroke="#fff" stroke-width="1.500"/>',
  wifi: '<g fill="none" stroke="#fff" stroke-width="1.500"><path d="M5 27C5 14 14 6 26 6" stroke-opacity=".5"/><path d="M10 27c0-9 7-15 16-15M15 27c0-6 4-10 11-10M20 27c0-3 2-5 6-5"/></g><circle cx="24" cy="26" r="2" fill="#fff"/>',
  volume: '<path d="M4 12h4l5-5v18l-5-5H4z" fill="none" stroke="#fff" stroke-width="1.500"/><path d="M17 12c2 2 2 6 0 8" fill="none" stroke="#fff" stroke-width="1.500"/><path d="M21 9c4 4 4 10 0 14M25 6c6 5 6 15 0 20" fill="none" stroke="#888" stroke-width="1.300"/>',
  notice: '<path d="M5 5h22v19h-7l-4 4-4-4H5z" fill="none" stroke="#fff" stroke-width="1.800"/>',
}

const Glyph = defineComponent({
  props: { name: { type: String, required: true }, size: { type: Number, default: 24 }, app: Boolean },
  setup(props) {
    return () =>
      h('svg', {
        viewBox: props.app ? '0 0 32 32' : '0 0 24 24',
        width: props.size,
        height: props.size,
        'aria-hidden': 'true',
        innerHTML: (props.app ? appGlyphs : glyphs)[props.name],
      })
  },
})

const menus = ['File', 'Edit', 'View', 'Insert', 'Tools', 'Simulation', 'PhotoView 360', 'Window']
const quick = ['doc', 'open', 'save', 'print', 'undo', 'redo']
const search = ref('')
const filter = ref('')

const drawTools = [
  'line', 'circle', 'spline', 'planes',
  'rect', 'arc', 'ellipse', 'letterA',
  'slot', 'polygon', 'fillet', 'point',
]
const noCaret = ['planes', 'letterA', 'polygon', 'point']

const entityTools = [
  { icon: 'mirror', label: 'Mirror Entities', caret: false },
  { icon: 'pattern', label: 'Linear Sketch Pattern', caret: true },
  { icon: 'move', label: 'Move Entities', caret: true },
]

const tabs = [
  'Features', 'Sketch', 'Surfaces', 'Sheet Metal', 'Weldments', 'Mold Tools', 'Direct Editing', 'Markup',
  'Evaluate', 'Render Tools', 'Simulation', 'Analysis Preparation', 'SOLIDWORKS Plastics', 'Flow Simulation',
]

interface TreeNode { label: string; icon: string; arrow?: 'open' | 'closed'; child?: boolean; off?: boolean; bar?: boolean }
const nodes: TreeNode[] = [
  { label: 'History', icon: 'history', arrow: 'closed' },
  { label: 'Sensors', icon: 'sensors' },
  { label: 'Annotations', icon: 'annotations', arrow: 'closed' },
  { label: 'Solid Bodies(1)', icon: 'bodies', arrow: 'closed' },
  { label: 'Material <not specified>', icon: 'material' },
  { label: 'Front Plane', icon: 'plane' },
  { label: 'Top Plane', icon: 'plane' },
  { label: 'Right Plane', icon: 'plane' },
  { label: 'Origin', icon: 'origin' },
  { label: 'Boss-Extrude1', icon: 'boss', arrow: 'open' },
  { label: 'Sketch1', icon: 'sketch', arrow: 'closed', child: true },
  { label: 'Plane1', icon: 'plane' },
  { label: 'Boss-Extrude2', icon: 'boss', arrow: 'open' },
  { label: 'Sketch2', icon: 'sketch', child: true },
  { label: 'Cut-Extrude1', icon: 'cut', arrow: 'open' },
  { label: 'Sketch3', icon: 'sketch', child: true },
  { label: 'Boss-Extrude3', icon: 'boss', arrow: 'open' },
  { label: 'Sketch4', icon: 'sketchClosed', child: true },
  { label: 'Cut-Extrude2', icon: 'cut', arrow: 'open' },
  { label: 'Sketch5', icon: 'sketch', child: true },
  { label: 'Plane2', icon: 'plane' },
  { label: 'Plane3', icon: 'plane' },
  { label: 'Boss-Extrude4', icon: 'bossOff', arrow: 'open', off: true },
  { label: 'Sketch6', icon: 'sketchActive', child: true, bar: true },
  { label: 'Cut-Extrude3', icon: 'cutOff', arrow: 'closed', off: true },
]

const panelTabs = ['part', 'props', 'config', 'target', 'ball', 'display']
const paneTabs = ['home', 'books', 'folder', 'palette', 'ball', 'props']
const viewTools = [
  { icon: 'zoomFit' }, { icon: 'zoomArea' }, { icon: 'prev' }, { icon: 'section' }, { icon: 'annView' },
  { icon: 'orient', caret: true }, { icon: 'style', caret: true }, { icon: 'eye', caret: true, on: true },
  { icon: 'sphereOff' }, { icon: 'scene', caret: true }, { icon: 'monitor', caret: true },
]
const apps = ['onenote', 'sw', 'explorer', 'whatsapp', 'chrome', 'lens', 'rs', 'office', 'teams', 'skype', 'movies', 'photos', 'slashes']
const tray = ['chevron', 'cloud', 'drive', 'battery', 'wifi', 'volume']
</script>

<template>
  <div class="app">
    <header class="titlebar">
      <div class="menus">
        <div class="logo"><Glyph name="ds" :size="22" /><b>SOLID</b><span>WORKS</span></div>
        <button v-for="m in menus" :key="m" class="menu">{{ m }}</button>
        <button class="pin" aria-label="Pin menu"><Glyph name="pin" :size="20" /></button>
      </div>
      <div class="quick">
        <button class="home" aria-label="Home"><Glyph name="home" :size="22" /></button>
        <div v-for="q in quick" :key="q" class="unit" :class="{ faded: q === 'redo' }">
          <button :aria-label="q"><Glyph :name="q" :size="21" /></button>
          <button :aria-label="q + ' options'"><Glyph name="caret" :size="16" /></button>
        </div>
        <div class="select-tool">
          <button aria-label="Select"><Glyph name="cursor" /></button>
          <button aria-label="Select options"><Glyph name="caret" :size="14" /></button>
        </div>
        <div class="extras">
          <button aria-label="Rebuild"><Glyph name="traffic" :size="20" /></button>
          <button aria-label="File properties"><Glyph name="options" :size="20" /></button>
          <button aria-label="Options"><Glyph name="gear" :size="22" /></button>
        </div>
        <button class="gear-caret" aria-label="More options"><Glyph name="caret" :size="16" /></button>
      </div>
      <h1>Sketch6 of Part1 *</h1>
      <label class="search">
        <Glyph name="prompt" :size="19" />
        <input v-model="search" type="text" placeholder="Search Commands" aria-label="Search commands" />
        <Glyph name="search" :size="20" />
        <Glyph name="caret" :size="18" />
      </label>
      <div class="window-buttons">
        <button aria-label="Account"><Glyph name="user" :size="22" /></button>
        <button aria-label="Help"><Glyph name="help" :size="22" /></button>
        <button aria-label="Minimize"><Glyph name="min" :size="22" /></button>
        <button aria-label="Restore"><Glyph name="restore" :size="22" /></button>
        <button aria-label="Close"><Glyph name="close" :size="22" /></button>
      </div>
    </header>

    <div class="ribbon">
      <div class="exit">
        <button class="tool"><Glyph name="exit" :size="22" />Exit ...</button>
        <button class="drop" aria-label="Exit options"><Glyph name="caret" :size="16" /></button>
      </div>
      <button class="tool"><Glyph name="smart" :size="22" />Smart Dimension<Glyph class="tail" name="caret" :size="16" /></button>
      <div class="draw">
        <div v-for="d in drawTools" :key="d">
          <button :aria-label="d"><Glyph :name="d" :size="21" /></button>
          <button v-if="!noCaret.includes(d)" class="mini" :aria-label="d + ' options'"><Glyph name="caret" :size="16" /></button>
        </div>
      </div>
      <button class="tool"><Glyph name="trim" :size="22" /><span><u>T</u>rim Entities</span><Glyph class="tail" name="caret" :size="16" /></button>
      <button class="tool"><Glyph name="cube" :size="22" />Convert Entities<Glyph class="tail" name="caret" :size="16" /></button>
      <button class="tool"><Glyph name="offset" :size="22" /><span>Offset<br />Entities</span></button>
      <button class="tool off" disabled><Glyph name="surface" :size="22" /><span>Offset On<br />Surface</span></button>
      <div class="entities">
        <div v-for="e in entityTools" :key="e.label">
          <button><Glyph :name="e.icon" :size="20" />{{ e.label }}</button>
          <button v-if="e.caret" :aria-label="e.label + ' options'"><Glyph name="caret" :size="16" /></button>
        </div>
      </div>
      <button class="tool"><Glyph name="relations" :size="22" />Display/Delete Relations<Glyph class="tail" name="caret" :size="16" /></button>
      <button class="tool edge"><Glyph name="repair" :size="22" /><span>Repair<br />Sketch</span></button>
      <button class="tool edge"><Glyph name="snaps" :size="22" />Qui...<Glyph class="tail" name="caret" :size="16" /></button>
      <button class="tool"><Glyph name="rapid" :size="22" /><span>Rapid<br />Sketch</span></button>
      <button class="tool"><Glyph name="instant" :size="22" />Instant2D</button>
      <button class="tool pressed"><Glyph name="shaded" :size="22" /><span>Shaded Sketch<br />Contours</span></button>
      <button class="collapse" aria-label="Collapse ribbon"><Glyph name="up" :size="18" /></button>
    </div>

    <main class="workspace">
      <div class="tabrow">
        <nav class="tabs">
          <button v-for="t in tabs" :key="t" :class="{ active: t === 'Sketch' }">{{ t }}</button>
        </nav>
        <div class="doc-buttons">
          <button aria-label="Previous pane"><Glyph name="paneLeft" /></button>
          <button aria-label="Next pane"><Glyph name="paneRight" /></button>
          <button aria-label="Minimize document"><Glyph name="min" :size="22" /></button>
          <button aria-label="Restore document"><Glyph name="restore" :size="22" /></button>
          <button aria-label="Close document"><Glyph name="close" :size="20" /></button>
        </div>
      </div>

      <div class="body">
        <aside class="panel">
          <div class="grip"><i></i></div>
          <div class="panel-tabs">
            <button v-for="(p, i) in panelTabs" :key="p" :class="{ active: i === 0 }" :aria-label="p"><Glyph :name="p" :size="20" /></button>
            <div class="pager">
              <button aria-label="Previous tabs"><svg width="6" height="10" viewBox="0 0 6 10"><path d="M5 1v8L1 5z" /></svg></button>
              <button aria-label="More tabs"><svg width="6" height="10" viewBox="0 0 6 10"><path d="M1 1v8l4-4z" /></svg></button>
            </div>
          </div>
          <label class="filter"><Glyph name="funnel" :size="20" /><input v-model="filter" type="text" aria-label="Filter tree" /></label>
          <div class="root"><Glyph name="part" :size="20" /><span>Part1&nbsp; (Default&lt;&lt;Default&gt;_Display S</span></div>
          <ul class="tree">
            <li v-for="n in nodes" :key="n.label" :class="{ child: n.child, off: n.off, bar: n.bar }">
              <button v-if="n.arrow" class="arrow" :aria-label="'Toggle ' + n.label"><Glyph :name="n.arrow + 'Arrow'" :size="18" /></button>
              <i v-else class="arrow"></i>
              <Glyph :name="n.icon" :size="18" />
              <span>{{ n.label }}</span>
            </li>
          </ul>
          <div class="hscroll">
            <button aria-label="Scroll left"><svg width="10" height="14" viewBox="0 0 10 14"><path d="M7 2L3 7l4 5" fill="none" stroke="#444" stroke-width="2" /></svg></button>
            <div class="track"><div class="thumb"></div></div>
            <button aria-label="Scroll right"><svg width="10" height="14" viewBox="0 0 10 14"><path d="M3 2l4 5-4 5" fill="none" stroke="#444" stroke-width="2" /></svg></button>
          </div>
        </aside>
        <div class="splitter"><i></i></div>

        <section class="canvas">
          <svg class="model" viewBox="284 150 1603 837">
            <defs>
              <linearGradient id="face" x1="0" y1="0" x2="0" y2="1">
                <stop offset="0" stop-color="#534f4a" /><stop offset=".16" stop-color="#423f3b" /><stop offset="1" stop-color="#42403c" />
              </linearGradient>
              <linearGradient id="bore">
                <stop offset="0" stop-color="#827e7a" /><stop offset=".14" stop-color="#93908c" /><stop offset=".5" stop-color="#403d3a" />
                <stop offset=".7" stop-color="#4a4744" /><stop offset="1" stop-color="#8a8783" />
              </linearGradient>
              <linearGradient id="lug" x1="0" y1="0" x2="0" y2="1">
                <stop offset="0" stop-color="#4f4c49" /><stop offset=".4" stop-color="#8d8a87" /><stop offset=".7" stop-color="#6a6764" /><stop offset="1" stop-color="#3b3936" />
              </linearGradient>
            </defs>
            <g stroke="#000" stroke-width="1.200">
              <path d="M756 573q-7 10-7 22v50q0 12 7 22z" fill="url(#lug)" />
              <path d="M756 635q-7 6-7 15 0 12 7 18z" fill="#42403c" />
              <path d="M1280 573q7 10 7 22v50q0 12-7 22z" fill="url(#lug)" />
              <path d="M1280 635q7 6 7 15 0 12-7 18z" fill="#42403c" />
              <path d="M789 705L974 906Q992 922 1018 922.500T1060 906L1246 705z" fill="#42403c" />
              <path d="M958.500 705Q957 710 957 715A61 43.500 0 0 0 1079 715Q1079 710 1077.500 705z" fill="url(#bore)" />
              <ellipse cx="1018" cy="888.500" rx="24.500" ry="17.300" fill="url(#bore)" />
              <path d="M755 290.500h525.500V705H755z" fill="url(#face)" />
            </g>
            <polygon points="1018,399.500 1037,401 1056,407 1073,416 1087,428 1099,442 1108,459 1114,478 1115.500,497 1114,516 1108,535 1099,552 1087,567 1073,579 1056,588 1037,594 1018,595 999,593 980,588 963,579 949,567 937,552 928,535 922,516 920,497 922,478 928,459 937,442 949,428 963,416 980,407 999,401" fill="#2f2d3d" stroke="#000" stroke-width="2" />
            <polygon points="1018,442.500 1036,446 1051,454 1063,466 1070,481 1072.500,498 1070,514 1063,530 1051,542 1036,550 1018,552.500 1000,550 984,542 972,530 965,514 963,498 965,481 972,466 984,454 1000,446" fill="#1f1d3f" stroke="#000" stroke-width="2" />
            <g stroke="#000" stroke-width="1.200" fill="none">
              <path d="M853.500 297v324M849 399.500h170M849 595.500h170M648.500 417v160M645 442.500h374M645 552.500h374" />
            </g>
            <path d="M853.500 399l-3-13h6zM853.500 596l-3 13h6zM648.500 442l-3-13h6zM648.500 553l-3 13h6z" fill="#000" />
            <g class="dimension">
              <text transform="translate(849 379) rotate(-90)">Ø32.00</text>
              <text transform="translate(644 568) rotate(-90)">Ø13.00</text>
            </g>
            <path d="M1017.500 498v-34M1017.500 498h-12" stroke="#e8102c" stroke-width="1.600" />
            <path d="M1017.500 456l4 13h-8zM996 498l13-4v8z" fill="#ee1230" />
            <path d="M1012 506h11v12h-11z" fill="#22c24a" /><path d="M1014 509h6M1015 512l5 4M1020 511l-5 5" stroke="#0b6420" stroke-width="1.300" />
            <text class="watermark" x="614" y="554"><tspan class="han">莫西网</tspan><tspan>www.3dmox.com</tspan></text>

            <path d="M323 896v22" stroke="#5fd872" stroke-width="4" />
            <path d="M323 919h32" stroke="#c0141c" stroke-width="4" /><path d="M360 920l-10-4.500v9z" fill="#b30f16" />
            <path d="M323 893l4 9h-8z" fill="#10107c" /><circle cx="323" cy="901" r="4" fill="#1c1ca8" /><circle cx="323" cy="919" r="2.500" fill="#222" />
            <path d="M323 912v6" stroke="#1f8a34" stroke-width="3" />
            <text class="axis z" x="320" y="889">Z</text>
            <text class="axis x" x="365" y="920">X</text>
          </svg>

          <div class="view-tools">
            <div v-for="v in viewTools" :key="v.icon" :class="{ on: v.on }">
              <button :aria-label="v.icon"><Glyph :name="v.icon" :size="19" /></button>
              <button v-if="v.caret" class="mini" :aria-label="v.icon + ' options'"><Glyph name="caret" :size="14" /></button>
            </div>
          </div>
          <div class="confirm">
            <button aria-label="Accept sketch">
              <svg width="44" height="36" viewBox="0 0 44 36"><path d="M20 2H2v16q0 9 9 9h11" fill="none" stroke="#b9cbd6" stroke-width="2" /><path d="M43 17c0 8-5 11-11 12v7l-9-10 9-8v5q6-1 11-6z" fill="#ccdce2" stroke="#a6bcc6" /></svg>
            </button>
            <button aria-label="Cancel sketch">
              <svg width="26" height="26" viewBox="0 0 26 26"><path d="M5 5l16 16M21 5L5 21" stroke="#e9b0b4" stroke-width="7.500" stroke-linecap="round" /></svg>
            </button>
          </div>
        </section>

        <nav class="task-pane">
          <button v-for="(p, i) in paneTabs" :key="i" :class="{ active: p === 'ball' }" :aria-label="p"><Glyph :name="p" :size="20" /></button>
        </nav>
      </div>
    </main>

    <div class="sheet-tabs">
      <div class="sheet-nav">
        <button aria-label="First"><svg width="12" height="14" viewBox="0 0 12 14"><path d="M1 1h2v12H1zM11 1v12L4 7z" /></svg></button>
        <button aria-label="Previous"><svg width="12" height="14" viewBox="0 0 12 14"><path d="M9 1v12L3 7z" /></svg></button>
        <button aria-label="Next"><svg width="12" height="14" viewBox="0 0 12 14"><path d="M3 1v12l6-6z" /></svg></button>
        <button aria-label="Last"><svg width="12" height="14" viewBox="0 0 12 14"><path d="M9 1h2v12H9zM1 1v12l7-6z" /></svg></button>
      </div>
      <button class="active">Model</button>
      <button>3D Views</button>
      <button>Motion Study 1</button>
    </div>

    <footer class="status">
      <span class="product">SOLIDWORKS Premium 2021 SP2.0</span>
      <span class="coord">-37.7mm</span>
      <span class="coord">-40.35mm</span>
      <span class="coord z">0mm</span>
      <span class="state">Fully Defined</span>
      <span class="editing">Editing Sketch6</span>
      <button class="units">MMGS</button>
      <Glyph name="upSmall" :size="16" />
      <Glyph class="tag" name="tag" :size="18" />
    </footer>

    <div class="taskbar">
      <div class="taskbar-inner">
        <button class="start" aria-label="Start"><Glyph name="windows" app :size="30" /></button>
        <button v-for="a in apps" :key="a" :class="{ running: a === 'sw' }" :aria-label="a"><Glyph :name="a" app :size="30" /></button>
        <div class="tray">
          <button v-for="t in tray" :key="t" :aria-label="t"><Glyph :name="t" app :size="26" /></button>
          <button class="lang">ENG</button>
          <button class="clock"><span>09:25</span><span>13-06-2021</span></button>
          <button class="notice" aria-label="Notifications"><Glyph name="notice" app :size="28" /></button>
          <i class="desktop"></i>
        </div>
      </div>
    </div>
  </div>
</template>

<style>
html, body { margin: 0; overflow: hidden; }
</style>

<style scoped>
* { box-sizing: border-box; }
.app {
  height: 100vh;
  display: flex;
  flex-direction: column;
  font-family: "Noto Sans", sans-serif;
  font-size: 14px;
  color: #1c1c1c;
  background: #d7dadd;
  overflow: hidden;
}
button {
  border: 0;
  padding: 0;
  margin: 0;
  background: none;
  font: inherit;
  color: inherit;
  display: flex;
  align-items: center;
  justify-content: center;
  white-space: nowrap;
}
svg { display: block; flex: none; }
h1 { margin: 0; font-weight: 400; }

.titlebar {
  flex: none;
  height: 40px;
  padding-top: 1px;
  display: flex;
  align-items: stretch;
  font-size: 13px;
  border-bottom: 1px solid #83858a;
  background:
    linear-gradient(to right, #7d7e82 42%, #d9b39f 42% 45%, #16161a 45% 58%, #7d7e82 58%) top / 100% 1px no-repeat,
    #dadcdf;
}
.menus { width: 640px; padding: 3px 3px 0 4px; display: flex; align-items: center; gap: 16px; border-right: 1px solid #83858a; }
.logo { width: 127px; display: flex; align-items: center; font-size: 13px; font-style: italic; color: #cf2b32; }
.logo svg { margin-right: 3px; }
.pin { margin-left: auto; }
.quick { display: flex; align-items: center; padding: 0 0 0 20px; }
.quick button { height: 24px; }
.home { width: 28px; margin-right: 6px; }
.unit { width: 47px; display: grid; grid-template-columns: 24px 24px; }
.unit.faded { width: 44px; grid-template-columns: 24px 20px; }
.unit.faded button:last-child { opacity: 0.4; }
.select-tool { display: grid; grid-template-columns: 32px 12px; border: 1px solid #7c7e82; }
.select-tool button { height: 31px; }
.select-tool button:first-child { background: #a8a9ab; border-right: 1px solid #7c7e82; }
.extras { display: flex; gap: 9px; padding-left: 5px; }
.extras button { width: 24px; }
.gear-caret { width: 24px; }
.titlebar h1 { padding-left: 100px; line-height: 40px; font-size: 13px; white-space: nowrap; }
.search { margin: 5px 6px 5px auto; width: 250px; padding: 0 0 0 6px; display: flex; align-items: center; background: #fff; border: 1px solid #d0d2d4; }
.search input { flex: 1; min-width: 0; border: 0; outline: 0; background: none; font: inherit; margin-left: 6px; padding: 0; }
.search input::placeholder { color: #666; opacity: 1; }
.window-buttons { display: flex; padding-right: 5px; color: #333; }
.window-buttons button { width: 41px; }

.ribbon {
  flex: none;
  height: 82px;
  padding: 1px 0 1px 6px;
  display: grid;
  grid-template-columns: 50px 115px 150px 86px 105px 56px 68px 199px 159px 51px 48px 54px 68px 101px 1fr;
  font-size: 13px;
  line-height: 19px;
  border-bottom: 1px solid #83858a;
  background: #d8dbde;
}
.tool { display: flex; flex-direction: column; justify-content: flex-start; padding-top: 3px; height: 79px; text-align: center; }
.tool > svg:first-child { margin-bottom: 1px; }
.tool .tail { margin-top: auto; margin-bottom: 3px; }
.tool.off { color: #96989b; }
.tool.edge { border-right: 1px solid #c6c8cb; }
.tool.pressed { padding-top: 2px; background: #a8a9ab; border: 1px solid #7c7e82; }
.exit { display: flex; flex-direction: column; border: 1px solid #8a8c90; height: 79px; }
.exit .tool { height: 58px; padding-top: 2px; background: #a8a9ab; border-bottom: 1px solid #8a8c90; }
.exit .drop { flex: 1; background: #dfe1e3; }
.draw {
  display: grid;
  grid-template-columns: repeat(4, 40px);
  grid-auto-rows: 26px;
  padding-left: 4px;
  border-left: 1px solid #c2c4c7;
  border-right: 1px solid #c2c4c7;
  overflow: hidden;
}
.draw > div { display: grid; grid-template-columns: 22px 16px; }
.entities { display: grid; grid-auto-rows: 26px; border-right: 1px solid #c2c4c7; }
.entities > div { display: flex; justify-content: space-between; }
.entities button:first-child { gap: 6px; }
.entities button:first-child svg { margin: 0 2px; }
.collapse { justify-self: end; align-self: end; margin: 0 6px 2px 0; }

.workspace {
  flex: 1;
  min-height: 0;
  display: flex;
  flex-direction: column;
  background:
    radial-gradient(ellipse 45% 32% at 100% 100%, rgba(238, 238, 245, 0.9), rgba(238, 238, 245, 0)),
    linear-gradient(to bottom, rgba(254, 254, 254, 0) 53%, rgba(254, 254, 254, 0.55) 61%, rgba(254, 254, 254, 0.9) 68%, #fefefe 76%),
    radial-gradient(ellipse 22% 70% at 83% 52%, rgba(217, 220, 232, 0.9) 0%, rgba(217, 220, 232, 0.5) 50%, rgba(217, 220, 232, 0) 100%),
    radial-gradient(ellipse 32% 100% at 82% 30%, rgba(219, 223, 235, 0.9) 0%, rgba(222, 226, 237, 0.6) 50%, rgba(226, 229, 239, 0) 100%),
    radial-gradient(ellipse 40% 50% at 100% 60%, rgba(220, 225, 238, 0.7), rgba(222, 227, 238, 0)),
    radial-gradient(ellipse 75% 27% at 34% 57%, #dadfeb, rgba(222, 226, 237, 0)),
    #fefefe;
}
.tabrow { flex: none; display: flex; justify-content: space-between; height: 28px; }
.tabs {
  display: grid;
  grid-template-columns: 75px 66px 75px 98px 94px 92px 109px 69px 74px 105px 91px 158px 171px 128px;
  background: #a8a9ac;
  border-bottom: 1px solid #8a8c90;
}
.tabs button { border-right: 1px solid #7e8084; padding: 0 0 2px 1px; }
.tabs .active { background: #d9dcdf; font-weight: 700; height: 28px; }
.doc-buttons { display: flex; padding-right: 7px; color: #8b8d91; }
.doc-buttons button { width: 26px; }

.body { flex: 1; min-height: 0; display: flex; align-items: stretch; }
.panel { flex: none; width: 273px; display: flex; flex-direction: column; background: #d7dadd; border-right: 1px solid #83858a; padding: 4px 2px 2px 0; }
.grip { flex: none; height: 21px; border-top: 1px solid #7d7f83; border-bottom: 1px solid #7d7f83; display: flex; align-items: center; justify-content: center; }
.grip i, .splitter i { width: 6px; height: 6px; border: 1px solid #8f9195; border-radius: 50%; }
.panel-tabs { flex: none; height: 26px; margin-top: 4px; display: grid; grid-template-columns: 41px 41px 40px 40px 40px 24px 44px; border-top: 1px solid #83858a; }
.panel-tabs > button { background: #a8a9ac; border-right: 1px solid #8a8c90; overflow: hidden; padding-bottom: 2px; }
.panel-tabs > .active { background: #d7dadd; padding-left: 4px; }
.panel-tabs > button:nth-child(6) { justify-content: flex-start; padding-left: 11px; border-right: 0; }
.pager { display: grid; grid-template-columns: 1fr 1fr; background: #f0f0f0; border: 1px solid #fff; border-right-color: #83858a; }
.pager button:first-child { border-right: 1px solid #a8a9ac; }
.filter { flex: none; height: 31px; margin: 0 4px 0 6px; display: flex; align-items: center; background: #f0f1f2; border: 1px solid #c5c7ca; }
.filter input { flex: 1; min-width: 0; border: 0; outline: 0; background: none; font: inherit; }
.root { flex: none; height: 25px; display: flex; align-items: center; gap: 3px; padding-left: 4px; overflow: hidden; white-space: nowrap; }
.tree { list-style: none; margin: 0; padding: 0; flex: 1; min-height: 0; }
.tree li { height: 24px; display: flex; align-items: center; padding-left: 3px; white-space: nowrap; }
.tree li.child { padding-left: 26px; }
.tree li > svg { margin: 0 5px 0 6px; }
.tree li.off span { color: #97999c; }
.tree li.bar { box-shadow: 0 2px 0 #a9adcb; }
.arrow { width: 18px; }
.hscroll { flex: none; height: 20px; margin: 0 0 3px; display: flex; background: #f2f2f3; }
.hscroll button { width: 22px; }
.track { flex: 1; }
.thumb { width: 84%; height: 100%; background: #cbcbcc; }
.splitter { flex: none; align-self: center; width: 11px; height: 48px; margin-top: -30px; display: flex; align-items: center; justify-content: center; background: #d7dadd; border: 1px solid #83858a; border-left: 0; }

.canvas { flex: 1; min-width: 0; position: relative; }
.model { width: 100%; height: 100%; }
.dimension { font-family: Lato, sans-serif; font-weight: 400; font-size: 22px; }
.watermark { font-family: "Liberation Serif", serif; font-size: 66px; fill: #e8e8e8; fill-opacity: 0.82; }
.watermark .han { font-family: "Noto Sans CJK SC", sans-serif; font-size: 72px; font-weight: 300; }
.axis { font-family: "Noto Sans", sans-serif; font-size: 11px; }
.axis.z { fill: #2a4f8c; }
.axis.x { fill: #d0455a; }
.view-tools { position: absolute; top: 2px; left: 16px; right: 0; display: flex; justify-content: center; }
.view-tools > div { display: flex; height: 25px; }
.view-tools button { width: 26px; }
.view-tools .mini { width: 14px; opacity: 0.6; }
.view-tools .on { border: 1px solid #8b8d91; background: #f0f0f2; }
.view-tools .on button:first-child { background: #b1b2b5; }
.view-tools .on .mini { width: 13px; opacity: 1; }
.confirm { position: absolute; top: 34px; right: 7px; display: flex; align-items: flex-start; }
.confirm button:last-child { margin-top: 30px; }

.task-pane { flex: none; width: 33px; margin-top: 29px; align-self: flex-start; border-top: 1px solid #7e8084; border-left: 1px solid #7e8084; }
.task-pane button { width: 100%; height: 30px; background: #a8a9ac; border-bottom: 1px solid #7e8084; }
.task-pane .active { background: #dfe1e4; }

.sheet-tabs { flex: none; height: 22px; display: flex; font-size: 15px; line-height: 18px; border-top: 1px solid #83858a; border-bottom: 1px solid #83858a; background: #d7dadd; }
.sheet-nav { display: grid; grid-template-columns: repeat(4, 20px); padding-left: 2px; margin-right: 1px; border-top: 1px solid #1e2a3a; }
.sheet-nav button { background: #a9adc2; border: 1px solid #8d90a3; border-right-width: 0; }
.sheet-nav path { fill: #8387a0; }
.sheet-tabs > button { padding: 0 11px 0 12px; background: #a8a9ac; border-right: 1px solid #7e8084; }
.sheet-tabs > button:last-child { padding-right: 24px; }
.sheet-tabs > .active { background: #dcdfe2; font-weight: 700; padding: 0 11px 0 15px; }

.status { flex: none; height: 21px; display: flex; align-items: center; padding: 4px 2px 0 1px; line-height: 16px; white-space: nowrap; background: #dadce0; }
.product { margin-right: auto; }
.coord { width: 95px; text-align: right; }
.coord.z { width: 54px; margin-right: 22px; }
.state { width: 105px; }
.editing { width: 223px; }
.units { width: 52px; margin-right: 16px; }
.tag { margin-left: 21px; }

.taskbar { flex: none; height: 35px; background: #101011; color: #fff; overflow: hidden; }
.taskbar-inner { height: 50px; display: flex; }
.taskbar-inner > button { width: 62px; }
.taskbar-inner > .start { width: 63px; padding-right: 4px; }
.taskbar-inner > .running { background: #333334; }
.tray { margin-left: auto; display: flex; }
.tray button { width: 30px; }
.tray .lang { width: 44px; }
.tray .clock { width: 92px; flex-direction: column; line-height: 20px; }
.tray .notice { width: 52px; }
.desktop { width: 8px; margin-left: 7px; border-left: 1px solid #444; }
</style>
